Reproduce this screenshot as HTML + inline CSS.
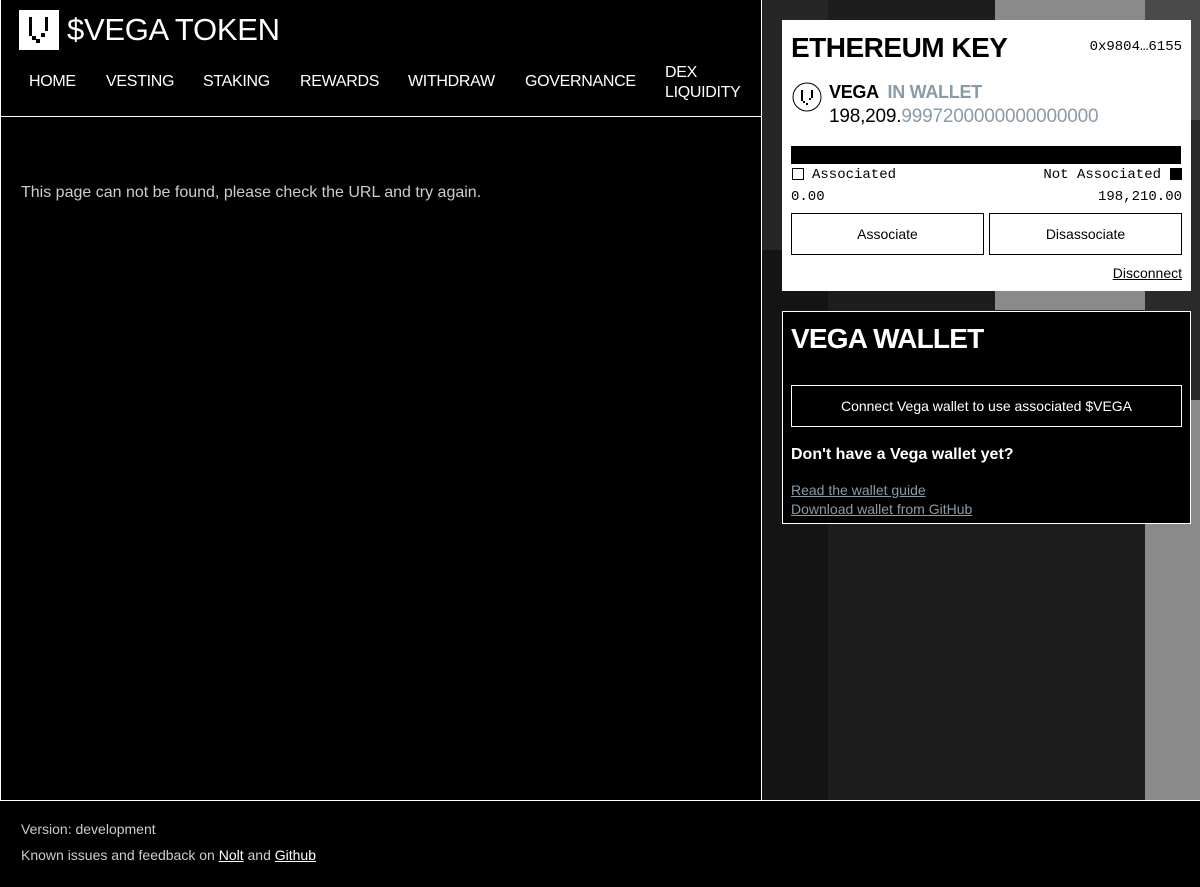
<!DOCTYPE html>
<html><head><meta charset="utf-8"><style>
*{box-sizing:border-box;margin:0;padding:0}
body{width:1200px;height:887px;background:#000;color:#fff;font-family:"Liberation Sans",Arial,sans-serif;position:relative;overflow:hidden}
.abs{position:absolute}
.mono{font-family:"Liberation Mono",monospace}
.nav a{position:absolute;top:73px;font-size:16px;color:#fff;text-decoration:none;letter-spacing:-0.3px}
.btn{position:absolute;border:1px solid #000;background:#fff;color:#000;font-size:14px;text-align:center}
</style></head><body>
<div class="abs" style="left:762px;top:0;width:438px;height:800px;background:#141414"></div>
<div class="abs" style="left:828px;top:0;width:167px;height:800px;background:#1d1d1d"></div>
<div class="abs" style="left:762px;top:0;width:66px;height:250px;background:#262626"></div>
<div class="abs" style="left:995px;top:0;width:150px;height:310px;background:#8a8a8a"></div>
<div class="abs" style="left:995px;top:310px;width:150px;height:490px;background:#1d1d1d"></div>
<div class="abs" style="left:1145px;top:0;width:55px;height:120px;background:#4a4a4a"></div>
<div class="abs" style="left:1145px;top:120px;width:55px;height:280px;background:#2a2a2a"></div>
<div class="abs" style="left:1145px;top:400px;width:55px;height:400px;background:#8a8a8a"></div>

<div class="abs" style="left:0;top:0;width:762px;height:801px;border:1px solid #fff;border-top:none;background:#000"></div>
<div class="abs" style="left:1px;top:116px;width:760px;height:1px;background:#fff"></div>
<svg class="abs" style="left:19px;top:10px" width="40" height="40" viewBox="0 0 40 40"><rect width="40" height="40" fill="#fff"/><g fill="#000"><rect x="10" y="7" width="3" height="19"/><rect x="26" y="7" width="3" height="14"/><rect x="13" y="26" width="4" height="4"/><rect x="22" y="23" width="4" height="4"/><rect x="17" y="29" width="4" height="4"/></g></svg>
<div class="abs" style="left:67px;top:11px;font-size:31px;line-height:38px;letter-spacing:-0.3px">$VEGA TOKEN</div>
<div class="nav">
<a style="left:29px">HOME</a><a style="left:106px">VESTING</a><a style="left:203px">STAKING</a><a style="left:300px">REWARDS</a><a style="left:408px">WITHDRAW</a><a style="left:525px">GOVERNANCE</a>
<a style="left:665px;top:63px;line-height:20px">DEX<br>LIQUIDITY</a></div>
<div class="abs" style="left:21px;top:184px;font-size:16px;color:#ccc">This page can not be found, please check the URL and try again.</div>

<div class="abs" style="left:782px;top:20px;width:409px;height:271px;background:#fff;color:#000">
<div class="abs" style="left:9px;top:12px;font-size:28px;font-weight:bold;letter-spacing:-0.5px">ETHEREUM KEY</div>
<div class="abs mono" style="right:9px;top:19px;font-size:14px">0x9804…6155</div>
<svg class="abs" style="left:10px;top:62px" width="30" height="30" viewBox="0 0 30 30"><circle cx="15" cy="15" r="14" fill="none" stroke="#000" stroke-width="1"/><g fill="#000"><rect x="9" y="8" width="2" height="11"/><rect x="19" y="8" width="2" height="8"/><rect x="11" y="19" width="2" height="2"/><rect x="17" y="16" width="2" height="2"/><rect x="14" y="21" width="2" height="2"/></g></svg>
<div class="abs" style="left:47px;top:62px;font-size:18px;font-weight:bold;letter-spacing:-0.3px">VEGA <span style="color:#8a9ba8">&nbsp;IN WALLET</span></div>
<div class="abs" style="left:47px;top:86px;font-size:19px;letter-spacing:-0.2px">198,209.<span style="color:#8a9ba8">9997200000000000000</span></div>
<div class="abs" style="left:9px;top:126px;width:390px;height:18px;background:#000"></div>
<div class="abs" style="left:10px;top:148px;width:12px;height:12px;border:1px solid #000"></div>
<div class="abs mono" style="left:30px;top:147px;font-size:14px">Associated</div>
<div class="abs mono" style="right:30px;top:147px;font-size:14px">Not Associated</div>
<div class="abs" style="right:9px;top:148px;width:12px;height:12px;background:#000"></div>
<div class="abs mono" style="left:9px;top:169px;font-size:14px">0.00</div>
<div class="abs mono" style="right:9px;top:169px;font-size:14px">198,210.00</div>
<div class="btn" style="left:9px;top:193px;width:193px;height:42px;line-height:40px">Associate</div>
<div class="btn" style="left:207px;top:193px;width:193px;height:42px;line-height:40px">Disassociate</div>
<div class="abs" style="right:9px;top:245px;font-size:14px;text-decoration:underline">Disconnect</div>
</div>

<div class="abs" style="left:782px;top:311px;width:409px;height:213px;background:#000;border:1px solid #fff">
<div class="abs" style="left:8px;top:11px;font-size:28px;font-weight:bold;letter-spacing:-0.8px">VEGA WALLET</div>
<div class="abs" style="left:8px;top:73px;width:391px;height:42px;border:1px solid #fff;text-align:center;line-height:40px;font-size:14px">Connect Vega wallet to use associated $VEGA</div>
<div class="abs" style="left:8px;top:134px;font-size:16px;font-weight:bold">Don't have a Vega wallet yet?</div>
<div class="abs" style="left:8px;top:169px;font-size:14px;color:#8a9ba8;text-decoration:underline;line-height:19px">Read the wallet guide<br>Download wallet from GitHub</div>
</div>

<div class="abs" style="left:0;top:800px;width:1200px;height:87px;background:#000;border-top:1px solid #fff"></div>
<div class="abs" style="left:21px;top:821px;font-size:14px;color:#ccc">Version: development</div>
<div class="abs" style="left:21px;top:847px;font-size:14px;color:#ccc">Known issues and feedback on <u style="color:#fff">Nolt</u> and <u style="color:#fff">Github</u></div>
</body></html>
